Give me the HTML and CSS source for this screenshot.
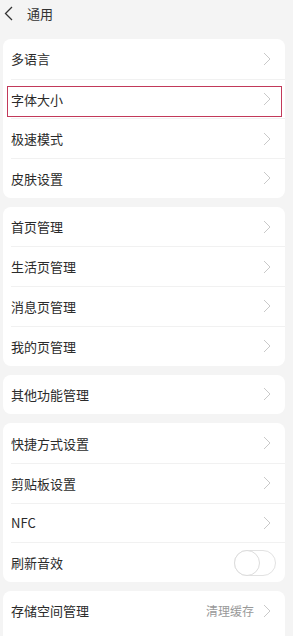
FILE: index.html
```html
<!DOCTYPE html>
<html lang="zh">
<head>
  <meta charset="UTF-8" />
  <meta name="viewport" content="width=device-width, initial-scale=1.0"/>
  <title>通用</title>
  <link rel="stylesheet" href="styles.css">
</head>
<body>

<div class="header">
  <svg class="back" width="9" height="15" viewBox="0 0 9 15"><path d="M8 1 L1.5 7.5 L8 14" fill="none" stroke="#333" stroke-width="1.3"/></svg>
  <span class="title">通用</span>
</div>

<div class="card">
  <div class="row"><span class="label">多语言</span><svg class="arrow" viewBox="0 0 8 14"><path d="M1 1 L7 7 L1 13"/></svg></div>
  <div class="row marked"><span class="label">字体大小</span><svg class="arrow" viewBox="0 0 8 14"><path d="M1 1 L7 7 L1 13"/></svg></div>
  <div class="row"><span class="label">极速模式</span><svg class="arrow" viewBox="0 0 8 14"><path d="M1 1 L7 7 L1 13"/></svg></div>
  <div class="row"><span class="label">皮肤设置</span><svg class="arrow" viewBox="0 0 8 14"><path d="M1 1 L7 7 L1 13"/></svg></div>
</div>

<div class="card">
  <div class="row"><span class="label">首页管理</span><svg class="arrow" viewBox="0 0 8 14"><path d="M1 1 L7 7 L1 13"/></svg></div>
  <div class="row"><span class="label">生活页管理</span><svg class="arrow" viewBox="0 0 8 14"><path d="M1 1 L7 7 L1 13"/></svg></div>
  <div class="row"><span class="label">消息页管理</span><svg class="arrow" viewBox="0 0 8 14"><path d="M1 1 L7 7 L1 13"/></svg></div>
  <div class="row"><span class="label">我的页管理</span><svg class="arrow" viewBox="0 0 8 14"><path d="M1 1 L7 7 L1 13"/></svg></div>
</div>

<div class="card">
  <div class="row"><span class="label">其他功能管理</span><svg class="arrow" viewBox="0 0 8 14"><path d="M1 1 L7 7 L1 13"/></svg></div>
</div>

<div class="card">
  <div class="row"><span class="label">快捷方式设置</span><svg class="arrow" viewBox="0 0 8 14"><path d="M1 1 L7 7 L1 13"/></svg></div>
  <div class="row"><span class="label">剪贴板设置</span><svg class="arrow" viewBox="0 0 8 14"><path d="M1 1 L7 7 L1 13"/></svg></div>
  <div class="row"><span class="label">NFC</span><svg class="arrow" viewBox="0 0 8 14"><path d="M1 1 L7 7 L1 13"/></svg></div>
  <div class="row"><span class="label">刷新音效</span><span class="switch"><span class="knob"></span></span></div>
</div>

<div class="card last">
  <div class="row"><span class="label">存储空间管理</span><span class="hint">清理缓存</span><svg class="arrow" viewBox="0 0 8 14"><path d="M1 1 L7 7 L1 13"/></svg></div>
</div>

</body>
</html>
```

FILE: styles.css
```css
html {
  overflow: hidden;
  height: 636px;
}

body {
  margin: 0;
  padding: 0 8px 0 3px;
  background: #f4f4f4;
  font-family: "Noto Sans CJK SC", "Noto Sans", sans-serif;
  color: #2b2b2b;
}

.header {
  display: flex;
  align-items: center;
  height: 27px;
  padding-left: 1px;
}

.back {
  margin-right: 14px;
}

.title {
  font-size: 13px;
  color: #333;
}

.card {
  background: #fff;
  border-radius: 8px;
  margin-top: 9px;
}

.header + .card {
  margin-top: 12px;
}

.card.last {
  padding-bottom: 20px;
}

.row {
  position: relative;
  display: flex;
  align-items: center;
  height: 39.7px;
  margin-left: 8px;
  padding-right: 14px;
  border-top: 1px solid #f1f1f1;
  box-sizing: border-box;
}

.row:first-child {
  border-top: none;
}

.label {
  flex: 1;
  font-size: 13px;
}

.hint {
  font-size: 12px;
  color: #999;
  margin-right: 9px;
}

.arrow {
  width: 8px;
  height: 14px;
  fill: none;
  stroke: #c9c9c9;
  stroke-width: 1;
}

.marked::after {
  content: "";
  position: absolute;
  top: 6px;
  bottom: 1px;
  left: -4px;
  right: 3px;
  border: 1px solid #c2395a;
}

.switch {
  position: relative;
  width: 42px;
  height: 26px;
  border: 1px solid #e2e2e2;
  border-radius: 14px;
  box-sizing: border-box;
  margin-right: -5px;
  margin-left: -6px;
}

.knob {
  position: absolute;
  top: -1px;
  left: -1px;
  width: 26px;
  height: 26px;
  border-radius: 50%;
  border: 1px solid #dcdcdc;
  background: #fff;
  box-sizing: border-box;
}
```
